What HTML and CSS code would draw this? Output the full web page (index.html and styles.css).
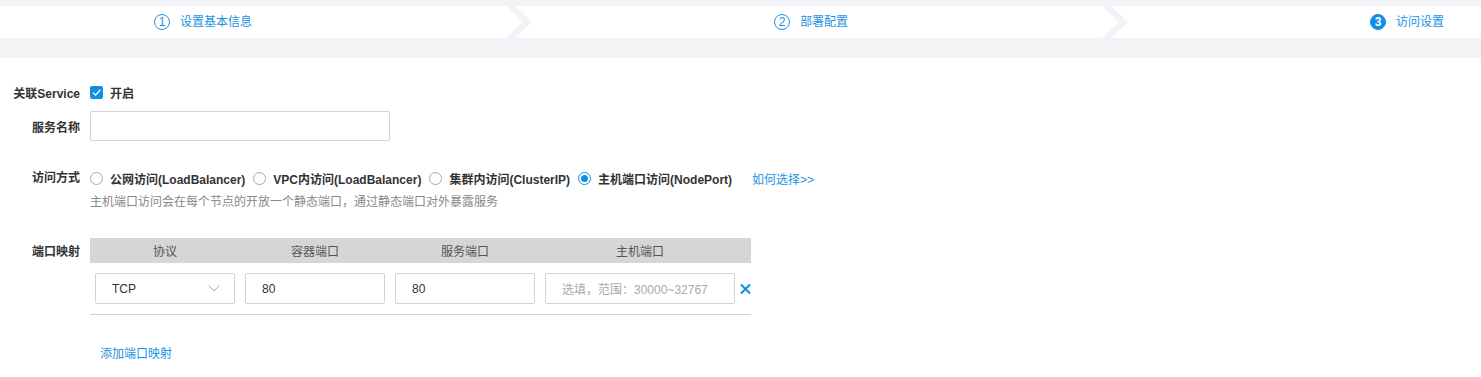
FILE: index.html
```html
<!DOCTYPE html>
<html lang="zh-CN">
<head>
<meta charset="utf-8">
<title>访问设置</title>
<link rel="stylesheet" href="styles.css">
</head>
<body>
<div class="steps-wrap">
  <div class="steps">
    <div class="step step-first">
      <span class="num">1</span><span class="step-text">设置基本信息</span>
      <svg class="chev" width="26" height="32" viewBox="0 0 26 32"><polygon points="0,0 9,0 26,16 9,32 0,32 17,16" fill="#f3f3f7"/></svg>
    </div>
    <div class="step">
      <span class="num">2</span><span class="step-text">部署配置</span>
      <svg class="chev" width="26" height="32" viewBox="0 0 26 32"><polygon points="0,0 9,0 26,16 9,32 0,32 17,16" fill="#f3f3f7"/></svg>
    </div>
    <div class="step">
      <span class="num num-active">3</span><span class="step-text">访问设置</span>
    </div>
  </div>
</div>

<div class="form">
  <div class="row row-check">
    <div class="label">关联Service</div>
    <div class="control">
      <span class="checkbox"><svg width="13" height="13" viewBox="0 0 13 13"><path d="M3 6.6 L5.6 9.1 L10.3 3.8" fill="none" stroke="#fff" stroke-width="1.3"/></svg></span>
      <span class="check-text">开启</span>
    </div>
  </div>

  <div class="row row-input">
    <div class="label">服务名称</div>
    <div class="control"><div class="text-input name-input"></div></div>
  </div>

  <div class="row row-radio">
    <div class="label">访问方式</div>
    <div class="control col">
      <div class="radios">
        <span class="radio-item"><span class="radio"></span>公网访问(LoadBalancer)</span>
        <span class="radio-item"><span class="radio"></span>VPC内访问(LoadBalancer)</span>
        <span class="radio-item"><span class="radio"></span>集群内访问(ClusterIP)</span>
        <span class="radio-item"><span class="radio radio-on"></span>主机端口访问(NodePort)</span>
        <a class="link how">如何选择&gt;&gt;</a>
      </div>
      <div class="help">主机端口访问会在每个节点的开放一个静态端口，通过静态端口对外暴露服务</div>
    </div>
  </div>

  <div class="row row-table">
    <div class="label label-table">端口映射</div>
    <div class="control col">
      <div class="ptable">
        <div class="thead">
          <div class="c c1">协议</div>
          <div class="c c2">容器端口</div>
          <div class="c c3">服务端口</div>
          <div class="c c4">主机端口</div>
          <div class="c c5"></div>
        </div>
        <div class="tbody">
          <div class="c c1"><div class="text-input select">TCP<svg width="12" height="7" viewBox="0 0 12 7"><path d="M0.5 0.5 L6 6 L11.5 0.5" fill="none" stroke="#aaa" stroke-width="1"/></svg></div></div>
          <div class="c c2"><div class="text-input">80</div></div>
          <div class="c c3"><div class="text-input">80</div></div>
          <div class="c c4"><div class="text-input placeholder">选填，范围：30000~32767</div></div>
          <div class="c c5"><svg width="12" height="12" viewBox="0 0 12 12"><path d="M1 1 L11 11 M11 1 L1 11" stroke="#0f8fe6" stroke-width="2.2"/></svg></div>
        </div>
      </div>
      <a class="link add">添加端口映射</a>
    </div>
  </div>
</div>
</body>
</html>
```
FILE: styles.css
```css
* { box-sizing: border-box; }
body {
  margin: 0;
  background: #fff;
  font-family: "Liberation Sans", "Noto Sans CJK SC", sans-serif;
  font-size: 12px;
  color: #333;
}
.steps-wrap {
  background: #f3f3f7;
  padding: 6px 0 20px;
  overflow: hidden;
}
.steps {
  display: flex;
  height: 32px;
  background: #fff;
  width: 1724px;
}
.step {
  position: relative;
  flex: 0 0 596px;
  display: flex;
  align-items: center;
  justify-content: flex-end;
  padding-right: 280px;
  color: #1a92e4;
}
.step-first { flex-basis: 532px; }
.num {
  width: 16px;
  height: 16px;
  border: 1px solid #1a92e4;
  border-radius: 50%;
  display: flex;
  align-items: center;
  justify-content: center;
  font-size: 12px;
  line-height: 1;
  margin-right: 10px;
}
.num-active {
  background: #0f8fe6;
  border-color: #0f8fe6;
  color: #fff;
  font-weight: bold;
}
.step-text { line-height: 16px; }
.chev {
  position: absolute;
  right: 0;
  top: 0;
}

.form { padding-top: 24px; }
.row { display: flex; }
.label {
  width: 80px;
  text-align: right;
  margin-right: 10px;
  color: #333;
  font-weight: bold;
  flex: none;
}
.control { display: flex; align-items: center; }
.col { flex-direction: column; align-items: flex-start; }
.row-check { height: 20px; align-items: center; }
.checkbox {
  width: 13px;
  height: 13px;
  background: #0f8fe6;
  border-radius: 2px;
  display: flex;
  margin-right: 7px;
}
.check-text { font-weight: bold; }
.row-input { margin-top: 9px; align-items: center; height: 30px; }
.text-input {
  height: 31px;
  border: 1px solid #d3d3d3;
  border-radius: 2px;
  background: #fff;
  display: flex;
  align-items: center;
  padding-left: 16px;
  color: #333;
}
.name-input { width: 300px; height: 30px; }
.row-radio { margin-top: 28px; }
.row-radio .label { line-height: 18px; }
.radios { display: flex; align-items: center; height: 18px; }
.radio-item {
  display: flex;
  align-items: center;
  margin-right: 8px;
  font-weight: bold;
  color: #333;
}
.radio {
  width: 13px;
  height: 13px;
  border: 1px solid #a9a9a9;
  border-radius: 50%;
  margin-right: 7px;
  position: relative;
}
.radio-on { border-color: #0f8fe6; }
.radio-on::after {
  content: "";
  position: absolute;
  left: 2px;
  top: 2px;
  width: 7px;
  height: 7px;
  border-radius: 50%;
  background: #0f8fe6;
}
.link { color: #1a92e4; cursor: pointer; }
.how { margin-left: 12px; }
.help { margin-top: 6px; line-height: 18px; color: #888; }
.row-table { margin-top: 27px; }
.label-table { line-height: 25px; padding-top: 2px; }
.ptable { width: 661px; border-bottom: 1px solid #d3d3d3; }
.thead {
  display: flex;
  height: 25px;
  background: #d6d6d6;
  color: #555;
  align-items: center;
}
.thead .c { text-align: center; }
.c1, .c2, .c3 { width: 150px; }
.c4 { width: 200px; }
.c5 { width: 11px; }
.tbody {
  display: flex;
  padding: 10px 0 10px;
  align-items: center;
}
.tbody .c { padding: 0 5px; }
.tbody .c5 { padding: 0; display: flex; align-items: center; }
.select { justify-content: space-between; padding-right: 14px; }
.placeholder { color: #aaa; }
.add { margin-top: 30px; margin-left: 10px; line-height: 18px; }
```
